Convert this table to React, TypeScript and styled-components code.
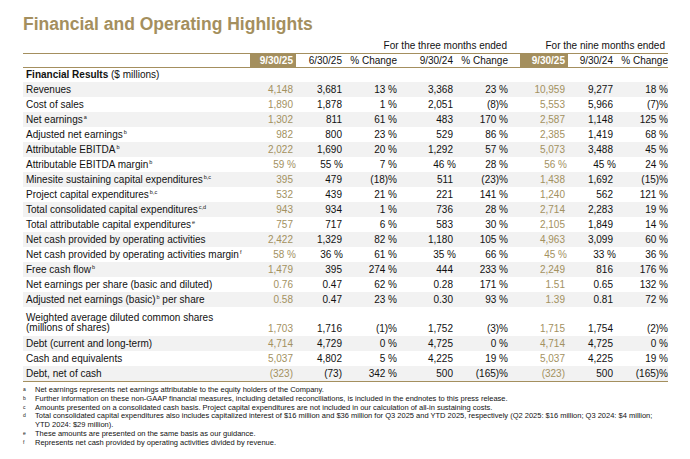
import React from "react";
import styled, { createGlobalStyle } from "styled-components";

const GOLD = "#a48f5e";
const GOLD_TEXT = "#a3915f";

const Global = createGlobalStyle`
  html, body { margin: 0; padding: 0; background: #ffffff; }
  body { font-family: "Liberation Sans", Arial, sans-serif; color: #111111; }
`;

const Page = styled.div`
  width: 690px;
  height: 459px;
  box-sizing: border-box;
  padding: 14px 22px 0 23px;
  overflow: hidden;
`;

const Title = styled.h1`
  margin: 0;
  font-size: 17.5px;
  line-height: 20px;
  font-weight: 700;
  color: ${GOLD};
`;

const Table = styled.div`
  width: 645px;
  margin-top: 4px;
  font-size: 10px;
`;

const GRID = "227px 46px 49px 52px 59px 64px 48px 48px 52px";

const GroupRow = styled.div`
  display: grid;
  grid-template-columns: ${GRID};
  height: 15px;
  line-height: 15px;
`;

const GroupLabel = styled.div<{ $from: number; $to: number; $pad: number }>`
  grid-column: ${(p) => p.$from} / ${(p) => p.$to};
  text-align: right;
  padding-right: ${(p) => p.$pad}px;
  white-space: nowrap;
`;

const HeadRow = styled.div`
  display: grid;
  grid-template-columns: ${GRID};
  height: 13px;
  line-height: 13px;
  border-top: 1px solid ${GOLD};
  border-bottom: 1px solid ${GOLD};
`;

const SectionRow = styled.div`
  height: 14px;
  line-height: 14px;
  padding-left: 3px;
`;

const Bold = styled.span`
  font-weight: 700;
`;

const DataRow = styled.div<{ $shade: boolean; $tall?: boolean }>`
  display: grid;
  grid-template-columns: ${GRID};
  height: ${(p) => (p.$tall ? 29 : 15)}px;
  background: ${(p) => (p.$shade ? "#f2f2f2" : "transparent")};
  align-items: end;
`;

const Label = styled.div<{ $tall?: boolean }>`
  padding-left: 3px;
  white-space: nowrap;
  align-self: start;
  padding-top: ${(p) => (p.$tall ? 6 : 1)}px;
  line-height: ${(p) => (p.$tall ? 10 : 14)}px;
`;

const Cell = styled.div<{ $pad: number; $gold?: boolean }>`
  text-align: right;
  white-space: nowrap;
  padding-right: ${(p) => p.$pad}px;
  line-height: 14px;
  height: 14px;
  color: ${(p) => (p.$gold ? GOLD_TEXT : "#111111")};
`;

const HeadCell = styled.div<{ $pad: number; $gold?: boolean }>`
  text-align: right;
  white-space: nowrap;
  padding-right: ${(p) => p.$pad}px;
  background: ${(p) => (p.$gold ? GOLD : "transparent")};
  color: ${(p) => (p.$gold ? "#ffffff" : "#111111")};
  font-weight: ${(p) => (p.$gold ? 700 : 400)};
`;

const Sup = styled.sup`
  font-size: 5.5px;
  line-height: 0;
  vertical-align: 4px;
  margin-left: 1px;
`;

const BottomRule = styled.div`
  height: 1px;
  background: ${GOLD};
`;

const Notes = styled.ol`
  list-style: none;
  margin: 4px 0 0 0;
  padding: 0;
  font-size: 7.5px;
  line-height: 8.8px;
  color: #111111;
`;

const Note = styled.li`
  display: flex;
`;

const Marker = styled.span`
  flex: 0 0 12px;
  font-size: 5px;
  line-height: 6px;
`;

const NoteText = styled.span`
  flex: 1;
`;

const COLS = [
  { num: 3, pct: 0 },
  { num: 3, pct: 2 },
  { num: 0, pct: 0 },
  { num: 3, pct: 0 },
  { num: 12, pct: 12 },
  { num: 3, pct: 1 },
  { num: 3, pct: 0 },
  { num: 0, pct: 0 },
];
const GOLD_COLS = [0, 5];

const HEADERS = ["9/30/25", "6/30/25", "% Change", "9/30/24", "% Change", "9/30/25", "9/30/24", "% Change"];

type Row = { label: React.ReactNode; v: string[]; tall?: boolean };

const ROWS: Row[] = [
  { label: "Revenues", v: ["4,148", "3,681", "13 %", "3,368", "23 %", "10,959", "9,277", "18 %"] },
  { label: "Cost of sales", v: ["1,890", "1,878", "1 %", "2,051", "(8)%", "5,553", "5,966", "(7)%"] },
  { label: <>Net earnings<Sup>a</Sup></>, v: ["1,302", "811", "61 %", "483", "170 %", "2,587", "1,148", "125 %"] },
  { label: <>Adjusted net earnings<Sup>b</Sup></>, v: ["982", "800", "23 %", "529", "86 %", "2,385", "1,419", "68 %"] },
  { label: <>Attributable EBITDA<Sup>b</Sup></>, v: ["2,022", "1,690", "20 %", "1,292", "57 %", "5,073", "3,488", "45 %"] },
  { label: <>Attributable EBITDA margin<Sup>b</Sup></>, v: ["59 %", "55 %", "7 %", "46 %", "28 %", "56 %", "45 %", "24 %"] },
  { label: <>Minesite sustaining capital expenditures<Sup>b,c</Sup></>, v: ["395", "479", "(18)%", "511", "(23)%", "1,438", "1,692", "(15)%"] },
  { label: <>Project capital expenditures<Sup>b,c</Sup></>, v: ["532", "439", "21 %", "221", "141 %", "1,240", "562", "121 %"] },
  { label: <>Total consolidated capital expenditures<Sup>c,d</Sup></>, v: ["943", "934", "1 %", "736", "28 %", "2,714", "2,283", "19 %"] },
  { label: <>Total attributable capital expenditures<Sup>e</Sup></>, v: ["757", "717", "6 %", "583", "30 %", "2,105", "1,849", "14 %"] },
  { label: "Net cash provided by operating activities", v: ["2,422", "1,329", "82 %", "1,180", "105 %", "4,963", "3,099", "60 %"] },
  { label: <>Net cash provided by operating activities margin<Sup>f</Sup></>, v: ["58 %", "36 %", "61 %", "35 %", "66 %", "45 %", "33 %", "36 %"] },
  { label: <>Free cash flow<Sup>b</Sup></>, v: ["1,479", "395", "274 %", "444", "233 %", "2,249", "816", "176 %"] },
  { label: "Net earnings per share (basic and diluted)", v: ["0.76", "0.47", "62 %", "0.28", "171 %", "1.51", "0.65", "132 %"] },
  { label: <>Adjusted net earnings (basic)<Sup>b</Sup> per share</>, v: ["0.58", "0.47", "23 %", "0.30", "93 %", "1.39", "0.81", "72 %"] },
  {
    label: <>Weighted average diluted common shares<br />(millions of shares)</>,
    v: ["1,703", "1,716", "(1)%", "1,752", "(3)%", "1,715", "1,754", "(2)%"],
    tall: true,
  },
  { label: "Debt (current and long-term)", v: ["4,714", "4,729", "0 %", "4,725", "0 %", "4,714", "4,725", "0 %"] },
  { label: "Cash and equivalents", v: ["5,037", "4,802", "5 %", "4,225", "19 %", "5,037", "4,225", "19 %"] },
  { label: "Debt, net of cash", v: ["(323)", "(73)", "342 %", "500", "(165)%", "(323)", "500", "(165)%"] },
];

const SHADED = [0, 2, 4, 6, 8, 10, 12, 14, 16, 18];

const NOTES: { m: string; t: React.ReactNode }[] = [
  { m: "a", t: "Net earnings represents net earnings attributable to the equity holders of the Company." },
  { m: "b", t: "Further information on these non-GAAP financial measures, including detailed reconciliations, is included in the endnotes to this press release." },
  { m: "c", t: "Amounts presented on a consolidated cash basis. Project capital expenditures are not included in our calculation of all-in sustaining costs." },
  {
    m: "d",
    t: (
      <>
        Total consolidated capital expenditures also includes capitalized interest of $16 million and $36 million for Q3 2025 and YTD 2025, respectively (Q2 2025: $16 million; Q3 2024: $4 million;
        <br />
        YTD 2024: $29 million).
      </>
    ),
  },
  { m: "e", t: "These amounts are presented on the same basis as our guidance." },
  { m: "f", t: "Represents net cash provided by operating activities divided by revenue." },
];

const padFor = (i: number, val: string) => (val.trim().endsWith("%") ? COLS[i].pct : COLS[i].num);

export default function App() {
  return (
    <>
      <Global />
      <Page>
        <Title>Financial and Operating Highlights</Title>
        <Table>
          <GroupRow>
            <GroupLabel $from={3} $to={7} $pad={13}>For the three months ended</GroupLabel>
            <GroupLabel $from={7} $to={10} $pad={3}>For the nine months ended</GroupLabel>
          </GroupRow>
          <HeadRow>
            <div />
            {HEADERS.map((h, i) => (
              <HeadCell key={i} $pad={padFor(i, h)} $gold={GOLD_COLS.includes(i)}>
                {h}
              </HeadCell>
            ))}
          </HeadRow>
          <SectionRow>
            <Bold>Financial Results</Bold> ($ millions)
          </SectionRow>
          {ROWS.map((r, ri) => (
            <DataRow key={ri} $shade={SHADED.includes(ri)} $tall={r.tall}>
              <Label $tall={r.tall}>{r.label}</Label>
              {r.v.map((val, i) => (
                <Cell key={i} $pad={padFor(i, val)} $gold={GOLD_COLS.includes(i)}>
                  {val}
                </Cell>
              ))}
            </DataRow>
          ))}
          <BottomRule />
        </Table>
        <Notes>
          {NOTES.map((n) => (
            <Note key={n.m}>
              <Marker>{n.m}</Marker>
              <NoteText>{n.t}</NoteText>
            </Note>
          ))}
        </Notes>
      </Page>
    </>
  );
}
